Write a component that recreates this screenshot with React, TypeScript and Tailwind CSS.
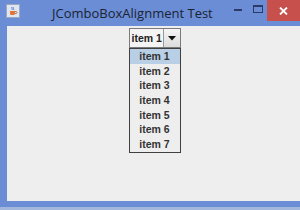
export default function App() {
  const items = ['item 1', 'item 2', 'item 3', 'item 4', 'item 5', 'item 6', 'item 7'];
  return (
    <div className="w-[300px] h-[210px] bg-[#a3b6dc] overflow-hidden">
      <div className="w-[300px] h-[207px] bg-[#6a8dd5] flex flex-col">
        {/* Title bar */}
        <div className="h-[26px] flex items-start relative">
          <div className="ml-[6px] mt-[4px] w-[14px] h-[14px] bg-[#dfe6f2] border border-[#9aa8c0] flex items-center justify-center">
            <svg width="10" height="10" viewBox="0 0 10 10">
              <path d="M2 5h5v2.5a1.5 1.5 0 0 1-1.5 1.5h-2A1.5 1.5 0 0 1 2 7.5z" fill="#e0763a" />
              <path d="M7 5.5h1a1 1 0 0 1 0 2H7" stroke="#c0602a" strokeWidth="0.8" fill="none" />
              <path d="M4 1c-1 1 1 2 0 3M5.5 1c-1 1 1 2 0 3" stroke="#4a6ab0" strokeWidth="0.8" fill="none" />
            </svg>
          </div>
          <div className="ml-[32px] mt-[5px] text-[13px] leading-[16px] text-[#1c2333] font-['Open_Sans',sans-serif]">
            JComboBoxAlignment Test
          </div>
          <div className="absolute left-[234px] top-[9px] w-[8px] h-[2px] bg-[#2b3a66]" />
          <div className="absolute left-[253px] top-[5px] w-[10px] h-[8px] border border-[#2b3a66] border-t-2" />
          <div className="absolute left-[267px] top-0 w-[33px] h-[21px] bg-[#c7504d] flex items-center justify-center">
            <svg width="9" height="8" viewBox="0 0 9 8">
              <path d="M1 0.5l7 7M8 0.5l-7 7" stroke="#fff" strokeWidth="1.8" />
            </svg>
          </div>
        </div>
        {/* Content */}
        <div className="ml-[7px] h-[175px] bg-[#eeeeee] flex justify-center font-['Liberation_Sans',Arial,sans-serif]">
          <div className="mt-[2px] ml-[2px] w-[52px] flex flex-col">
            <div className="h-[20px] flex border border-[#7a7a7a]">
              <div className="flex-1 min-w-0 bg-[#f4f4f4] text-[10.5px] font-bold text-[#222] leading-[18px] pl-[2px] whitespace-nowrap overflow-hidden">item 1</div>
              <div className="w-[17px] shrink-0 border-l border-[#9a9a9a] bg-gradient-to-b from-[#f6f6f6] to-[#dcdcdc] flex items-center justify-center">
                <svg width="8" height="5" viewBox="0 0 8 5">
                  <path d="M0 0h8L4 4.5z" fill="#111" />
                </svg>
              </div>
            </div>
            <div className="border border-[#404040] bg-[#eeeeee] flex flex-col">
              {items.map((it, i) => (
                <div
                  key={it}
                  className={`h-[14.7px] text-[10.5px] font-bold text-[#333] leading-[14.7px] text-center whitespace-nowrap ${i === 0 ? 'bg-[#b8cfe5]' : ''}`}
                >
                  {it}
                </div>
              ))}
            </div>
          </div>
        </div>
      </div>
    </div>
  );
}
